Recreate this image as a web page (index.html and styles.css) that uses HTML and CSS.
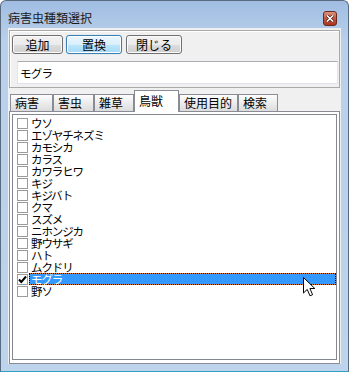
FILE: index.html
```html
<!DOCTYPE html>
<html lang="ja">
<head>
    <meta charset="UTF-8">
    <title>病害虫種類選択</title>
    <link rel="stylesheet" href="styles.css">
</head>
<body>
    <div class="window">
        <div class="titlebar">
            <span class="title">病害虫種類選択</span>
            <span class="close">
                <svg width="8" height="7" viewBox="0 0 8 7">
                    <path d="M1 0.5 L7 6.5 M7 0.5 L1 6.5" stroke="#3a1a14" stroke-width="3"/>
                    <path d="M1 0.5 L7 6.5 M7 0.5 L1 6.5" stroke="#fff" stroke-width="1.6"/>
                </svg>
            </span>
        </div>

        <div class="client">
            <div class="group">
                <div class="buttons">
                    <button class="btn btn-add">追加</button>
                    <button class="btn btn-replace">置換</button>
                    <button class="btn btn-close">閉じる</button>
                </div>
                <input class="field" type="text" value="モグラ">
            </div>

            <div class="tabs">
                <div class="tab" style="width:43px">病害</div>
                <div class="tab" style="width:41px">害虫</div>
                <div class="tab" style="width:40px">雑草</div>
                <div class="tab tab-active" style="width:45px">鳥獣</div>
                <div class="tab" style="width:59px">使用目的</div>
                <div class="tab" style="width:40px">検索</div>
            </div>

            <div class="page">
                <ul class="list">
                    <li class="item"><span class="check"></span><span class="label">ウソ</span></li>
                    <li class="item"><span class="check"></span><span class="label">エゾヤチネズミ</span></li>
                    <li class="item"><span class="check"></span><span class="label">カモシカ</span></li>
                    <li class="item"><span class="check"></span><span class="label">カラス</span></li>
                    <li class="item"><span class="check"></span><span class="label">カワラヒワ</span></li>
                    <li class="item"><span class="check"></span><span class="label">キジ</span></li>
                    <li class="item"><span class="check"></span><span class="label">キジバト</span></li>
                    <li class="item"><span class="check"></span><span class="label">クマ</span></li>
                    <li class="item"><span class="check"></span><span class="label">スズメ</span></li>
                    <li class="item"><span class="check"></span><span class="label">ニホンジカ</span></li>
                    <li class="item"><span class="check"></span><span class="label">野ウサギ</span></li>
                    <li class="item"><span class="check"></span><span class="label">ハト</span></li>
                    <li class="item"><span class="check"></span><span class="label">ムクドリ</span></li>
                    <li class="item selected">
                        <span class="check">
                            <svg width="9" height="9" viewBox="0 0 9 9">
                                <path d="M1 4.5 L3.3 7 L8 1.5" fill="none" stroke="#000" stroke-width="2"/>
                            </svg>
                        </span>
                        <span class="label">モグラ</span>
                    </li>
                    <li class="item"><span class="check"></span><span class="label">野ソ</span></li>
                </ul>
            </div>
        </div>

        <!-- mouse pointer over the selected row -->
        <svg class="cursor" width="14" height="21" viewBox="0 0 14 21">
            <path d="M0.5 0.5 L0.5 16 L4.2 12.4 L7 18.8 L9.6 17.7 L6.9 11.5 L11.8 11.5 Z" fill="#fff" stroke="#000" stroke-width="1" stroke-linejoin="round"/>
        </svg>
    </div>
</body>
</html>
```

FILE: styles.css
```css
body {
    margin: 0;
    background: #fff;
    font-family: "Noto Sans CJK JP", "Noto Sans", sans-serif;
    font-size: 12px;
    color: #000;
}
.window {
    position: relative;
    width: 349px;
    height: 372px;
    box-sizing: border-box;
    border: 1px solid #5a6b80;
    border-bottom-color: #2f9fc4;
    border-radius: 6px 6px 0 0;
    padding: 0 7px 7px 7px;
    background: linear-gradient(#a0bde2, #b9d0eb 40px, #bed3ec);
    display: flex;
    flex-direction: column;
}
.titlebar {
    height: 27px;
    box-sizing: border-box;
    padding-top: 10px;
    display: flex;
    justify-content: space-between;
    align-items: flex-start;
}
.title {
    line-height: 14px;
    color: #1a1a1a;
}
.close {
    width: 14px;
    height: 15px;
    box-sizing: border-box;
    margin-right: 4px;
    border: 1px solid #6b2a20;
    border-radius: 3px;
    background: linear-gradient(#dd9480, #c25640 50%, #a9361f);
    display: flex;
    align-items: center;
    justify-content: center;
}
.close svg {
    display: block;
}
.client {
    flex: 1;
    background: #f0f0f0;
    display: flex;
    flex-direction: column;
}
.group {
    margin: 2px 1px 0 1px;
    height: 58px;
    box-sizing: border-box;
    border: 1px solid #a9a9a9;
    box-shadow: inset 1px 1px 0 #fff;
    padding: 4px 2px 0 2px;
}
.buttons {
    display: flex;
    height: 19px;
}
.btn {
    height: 19px;
    margin: 0 3px 0 0;
    padding: 0;
    box-sizing: border-box;
    font-family: inherit;
    font-size: 12px;
    line-height: 15px;
    color: #000;
    border: 1px solid #707070;
    border-radius: 3px;
    background: linear-gradient(#f2f2f2, #ebebeb 50%, #dddddd 51%, #cfcfcf);
    box-shadow: inset 0 0 0 1px #fbfbfb;
}
.btn-add {
    width: 51px;
}
.btn-replace {
    width: 56px;
    margin-right: 4px;
    border-color: #3c7fb1;
    background: linear-gradient(#eaf6fd, #d9f0fc 50%, #bee6fd 51%, #a7d9f5);
    box-shadow: inset 0 0 0 1px #fff, 0 0 1px #7fc4ec;
}
.btn-close {
    width: 56px;
}
.field {
    display: block;
    margin: 7px 0 0 5px;
    width: 321px;
    height: 23px;
    box-sizing: border-box;
    padding: 0 2px;
    border: 1px solid #e2e3ea;
    border-top-color: #abadb3;
    font-family: inherit;
    font-size: 11.5px;
    letter-spacing: -0.8px;
    background: #fff;
    outline: none;
}
.tabs {
    display: flex;
    align-items: flex-end;
    height: 21px;
    margin: 2px 0 0 2px;
}
.tab {
    height: 17px;
    box-sizing: border-box;
    border: 1px solid #898c95;
    border-bottom: none;
    padding-left: 4px;
    line-height: 16px;
    background: linear-gradient(#fdfdfd, #ececec 50%, #dcdcdc);
}
.tab-active {
    position: relative;
    height: 22px;
    margin-bottom: -1px;
    padding-top: 2px;
    background: #fff;
    z-index: 1;
}
.page {
    flex: 1;
    margin-left: 1px;
    margin-right: 1px;
    border: 1px solid #898c95;
    background: #fff;
    padding: 2px 2px 3px 2px;
    display: flex;
}
.list {
    flex: 1;
    margin: 0;
    padding: 2px 0 0 4px;
    list-style: none;
    border: 1px solid #828790;
    background: #fff;
}
.item {
    display: flex;
    align-items: flex-start;
    height: 12px;
}
.check {
    width: 11px;
    height: 11px;
    box-sizing: border-box;
    margin-top: 1px;
    border: 1px solid #9c9c9c;
    background: #fff;
    display: flex;
    align-items: center;
    justify-content: center;
}
.check svg {
    display: block;
}
.label {
    flex: 1;
    height: 12px;
    box-sizing: border-box;
    margin-left: 1px;
    padding-left: 2px;
    font-size: 11.5px;
    line-height: 12px;
    letter-spacing: -1.1px;
    white-space: nowrap;
}
.selected .label {
    border: 1px dotted #000;
    padding-left: 1px;
    line-height: 10px;
    color: #fff;
    background: linear-gradient(#3399ff, #3399ff) padding-box, linear-gradient(#e07b1f, #e07b1f) border-box;
}
.cursor {
    position: absolute;
    left: 302px;
    top: 276px;
}
```
